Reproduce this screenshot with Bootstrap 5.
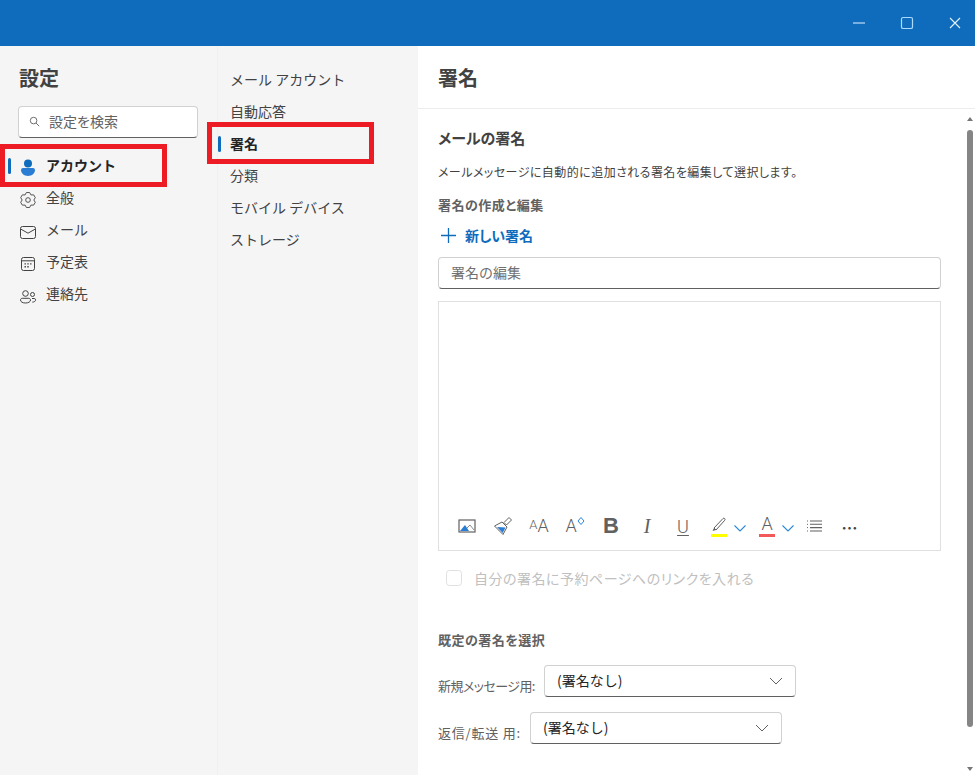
<!DOCTYPE html>
<html lang="ja">
<head>
  <meta charset="UTF-8" />
  <meta name="viewport" content="width=device-width, initial-scale=1" />
  <title>設定 - 署名</title>
  <link href="https://cdn.jsdelivr.net/npm/bootstrap@5.3.3/dist/css/bootstrap.min.css" rel="stylesheet">
  <style>
    body {
      font-family: "Noto Sans CJK JP", "Liberation Sans", sans-serif;
      font-feature-settings: "palt";
      font-size: 14px;
      color: #424242;
      background: #fff;
      height: 775px;
      overflow: hidden;
      position: relative;
    }

    /* title bar */
    .titlebar { height: 46px; background: #0f6cbd; gap: 32px; padding-right: 12px; }
    .titlebar svg { width: 16px; height: 16px; }

    .main { height: 729px; }

    /* settings columns */
    .col-nav { width: 218px; background: #f5f5f5; border-right: 1px solid #f0f0f0; padding: 18px 20px 0 18px; }
    .col-sub { width: 200px; background: #f5f5f5; padding-top: 18px; }
    .settings-title { font-size: 20px; font-weight: 700; line-height: 28px; margin: 0 0 14px 1px; color: #424242; }
    .search-box { height: 32px; width: 180px; background: #fff; border: 1px solid #d1d1d1; border-bottom-color: #616161; border-radius: 4px; padding: 0 0 2px 10px; gap: 9px; color: #616161; margin-bottom: 12px; }
    .nav-row { height: 32px; line-height: 30px; padding-bottom: 2px; position: relative; color: #424242; cursor: pointer; font-feature-settings: normal; }
    .col-nav .nav-row { gap: 9px; padding-left: 1px; }
    .col-sub .nav-row { padding-left: 12px; }
    .nav-row.active { font-weight: 700; color: #242424; }
    .nav-row.active::before { content: ""; position: absolute; top: 8px; width: 3px; height: 16px; border-radius: 2px; background: #0f6cbd; }
    .col-nav .nav-row.active::before { left: -10px; }
    .col-sub .nav-row.active::before { left: 0; }
    .nav-row svg { width: 18px; height: 18px; flex: none; margin-top: 6px; }

    /* red highlight frames */
    .red-frame { position: absolute; border: 5px solid #ed1c24; pointer-events: none; }
    .frame-account { left: 0; top: 144px; width: 167px; height: 43px; }
    .frame-sign { left: 207px; top: 122px; width: 167px; height: 42px; }

    /* right pane */
    .pane { width: 557px; }
    .pane-head { height: 63px; border-bottom: 1px solid #ededed; padding: 18px 0 0 20px; font-size: 20px; font-weight: 700; line-height: 28px; }
    .pane-body { height: 666px; }
    .pane-content { width: 547px; padding: 17px 24px 0 20px; }
    .h-mail { font-size: 15px; font-weight: 700; line-height: 24px; margin-bottom: 12px; }
    .desc { font-size: 12px; line-height: 20px; letter-spacing: .45px; margin-bottom: 13px; }
    .h-small { font-size: 13px; font-weight: 700; line-height: 20px; letter-spacing: .5px; color: #616161; }
    .new-sign { color: #0f6cbd; font-weight: 700; line-height: 20px; margin: 10px 0 12px 2px; gap: 8px; }
    .new-sign svg { width: 17px; height: 17px; }
    .sign-name { height: 32px; font-size: 14px; border-color: #d1d1d1; border-bottom-color: #616161; border-radius: 4px; padding: 0 0 2px 12px; color: #424242; }
    .sign-name::placeholder { color: #707070; }
    .editor { height: 250px; border: 1px solid #e0e0e0; margin-top: 12px; padding: 0 0 6px 10px; }
    .tool { width: 36px; height: 36px; flex: none; color: #616161; }
    .tool-wide { width: 48px; padding-left: 10px; }
    .tool svg { width: 20px; height: 20px; }
    .tool .chev { width: 14px; height: 14px; margin-left: 6px; margin-top: 3px; }
    .tool .g-a-sup { width: 8px; height: 8px; margin-bottom: 11px; }
    .g-b { font: 700 22px "Liberation Sans", sans-serif; }
    .g-i { font: italic 300 20px "Liberation Serif", serif; }
    .g-u { font: 300 18px Roboto, sans-serif; text-decoration: underline; text-decoration-thickness: 1px; text-underline-offset: 2px; }
    .g-a { font: 300 18px Roboto, sans-serif; line-height: 1; }
    .g-a-small { font: 300 13px Roboto, sans-serif; margin-bottom: 3px; }
    .colour-a { display: block; width: 16px; text-align: center; padding-bottom: 1px; border-bottom: 3px solid #f25a5a; }
    .hl-wrap { width: 16px; height: 21px; border-bottom: 3px solid #ffff00; }
    .hl-wrap svg { width: 16px; height: 16px; display: block; }
    .more { font-size: 16px; letter-spacing: 3px; color: #424242; font-weight: 700; padding-top: 1px; }

    .booking { margin: 17px 0 0 8px; gap: 12px; color: #c0c0c0; line-height: 20px; letter-spacing: .5px; }
    .booking .form-check-input { width: 16px; height: 16px; margin: 0; border-color: #e0e0e0; background-color: #fff; opacity: 1; flex: none; }
    .h-default { margin: 42px 0 15px; }
    .sig-row { gap: 9px; margin-bottom: 15px; }
    .sig-label { font-size: 13px; line-height: 20px; margin-bottom: 1px; color: #616161; }
    .label-new { letter-spacing: -.55px; }
    .label-reply { letter-spacing: .8px; }
    .sig-select {
      width: 252px; height: 32px; font-size: 14px; color: #242424;
      border-color: #d1d1d1; border-bottom-color: #616161; border-radius: 4px;
      padding: 0 30px 2px 12px;
      background-image: url("data:image/svg+xml,%3csvg xmlns='http://www.w3.org/2000/svg' viewBox='0 0 14 14'%3e%3cpath d='M1 4l6 6 6-6' fill='none' stroke='%23616161'/%3e%3c/svg%3e");
      background-size: 14px 14px; background-position: right 12px center;
    }

    /* scrollbar */
    .scrollbar { width: 10px; position: relative; }
    .sb-up, .sb-down { width: 0; height: 0; border-left: 3px solid transparent; border-right: 3px solid transparent; margin-left: 2px; }
    .sb-up { border-bottom: 4px solid #767676; margin-top: 8px; }
    .sb-down { border-top: 4px solid #767676; margin-bottom: 4px; }
    .sb-thumb { width: 6px; height: 597px; background: #858585; border-radius: 3px; margin: 9px 0 0 2px; }
  </style>
</head>
<body>

<!-- Title bar -->
<div class="titlebar d-flex justify-content-end align-items-center">
  <svg viewBox="0 0 16 16"><path d="M2 8h12" stroke="#a9cfee" stroke-width="1.4"/></svg>
  <svg viewBox="0 0 16 16"><rect x="2.5" y="2.5" width="11" height="11" rx="1.6" fill="none" stroke="#a9dcff" stroke-width="1.2"/></svg>
  <svg viewBox="0 0 16 16"><path d="M3 3l10 10M13 3L3 13" stroke="#e6f2fb" stroke-width="1.1"/></svg>
</div>

<div class="main d-flex">
  <!-- Left nav -->
  <div class="col-nav flex-shrink-0">
    <div class="settings-title">設定</div>
    <div class="search-box d-flex align-items-center">
      <svg width="11" height="11" viewBox="0 0 12 12"><circle cx="5" cy="5" r="3.6" fill="none" stroke="#616161"/><path d="M7.7 7.7l3.4 3.4" stroke="#616161"/></svg>
      <span>設定を検索</span>
    </div>
    <div class="nav-row active d-flex align-items-center">
      <svg viewBox="0 0 18 18"><circle cx="9" cy="4.5" r="4" fill="#0f6cbd"/><path d="M2 11c0-1.200 1-2 2-2h10c1 0 2 .8 2 2 0 3-3 6-7 6s-7-3-7-6z" fill="#2b7cd3"/></svg>
      <span>アカウント</span>
    </div>
    <div class="nav-row d-flex align-items-center">
      <svg viewBox="0 0 20 20"><polygon points="8.2,1.7 11.8,1.7 13.25,4.37 16.3,4.3 18.1,7.4 16.5,10 18.1,12.6 16.3,15.7 13.25,15.63 11.8,18.3 8.2,18.3 6.75,15.63 3.7,15.7 1.9,12.6 3.5,10 1.9,7.4 3.7,4.3 6.75,4.37" fill="none" stroke="#424242" stroke-linejoin="round"/><circle cx="10" cy="10" r="2.6" fill="none" stroke="#424242"/></svg>
      <span>全般</span>
    </div>
    <div class="nav-row d-flex align-items-center">
      <svg viewBox="0 0 18 18"><rect x="1.5" y="3.5" width="15" height="12" rx="2" fill="none" stroke="#424242"/><path d="M1.7 6L9 10.2 16.3 6" fill="none" stroke="#424242"/></svg>
      <span>メール</span>
    </div>
    <div class="nav-row d-flex align-items-center">
      <svg viewBox="0 0 18 18"><rect x="2.5" y="2.5" width="13" height="13" rx="2" fill="none" stroke="#424242"/><path d="M2.5 5.8h13" stroke="#424242"/><path d="M5.5 8.2h1.4v1.4H5.500zM8.300 8.200h1.400v1.400H8.300zM11.100 8.200h1.400v1.400h-1.400zM5.500 11h1.400v1.400H5.500zM8.300 11h1.400v1.400H8.300z" fill="#424242"/></svg>
      <span>予定表</span>
    </div>
    <div class="nav-row d-flex align-items-center">
      <svg viewBox="0 0 18 18"><circle cx="6.500" cy="6.500" r="2.800" fill="none" stroke="#424242"/><circle cx="13.500" cy="7.500" r="2" fill="none" stroke="#424242"/><path d="M1.500 13c0-1 .8-1.700 1.700-1.700h6.600c.9 0 1.700.7 1.700 1.700 0 1.800-2 3-5 3s-5-1.200-5-3zM13 11.500h2.300c.7 0 1.300.6 1.300 1.300 0 1.400-1.300 2.300-3.300 2.300" fill="none" stroke="#424242"/></svg>
      <span>連絡先</span>
    </div>
  </div>

  <!-- Sub nav -->
  <div class="col-sub flex-shrink-0">
    <div class="nav-row">メール アカウント</div>
    <div class="nav-row">自動応答</div>
    <div class="nav-row active">署名</div>
    <div class="nav-row">分類</div>
    <div class="nav-row">モバイル デバイス</div>
    <div class="nav-row">ストレージ</div>
  </div>

  <!-- Signature pane -->
  <div class="pane flex-shrink-0">
    <div class="pane-head">署名</div>
    <div class="pane-body d-flex">
      <div class="pane-content flex-shrink-0">
        <div class="h-mail">メールの署名</div>
        <div class="desc">メールメッセージに自動的に追加される署名を編集して選択します。</div>
        <div class="h-small">署名の作成と編集</div>
        <div class="new-sign d-flex align-items-center">
          <svg viewBox="0 0 17 17"><path d="M8.500 1v15M1 8.500h15" stroke="#0f6cbd" stroke-width="1.300"/></svg>
          <span>新しい署名</span>
        </div>
        <input class="form-control sign-name" type="text" placeholder="署名の編集">
        <div class="editor d-flex align-items-end">
          <div class="tool d-flex align-items-center justify-content-center">
            <svg viewBox="0 0 20 20"><rect x="2" y="4" width="16" height="12" fill="none" stroke="#616161" stroke-width="1.200"/><path d="M3 15l5-6 4 6z" fill="#2b7cd3"/><path d="M10 12l3-3 4 5" fill="none" stroke="#8a8a8a"/></svg>
          </div>
          <div class="tool d-flex align-items-center justify-content-center">
            <svg viewBox="0 0 20 20"><path d="M1.500 10L9 6l5 5-4 7.500z" fill="#fff" stroke="#616161" stroke-linejoin="round"/><path d="M4 11l8.500.5-2.800 5.500z" fill="#2b7cd3"/><path d="M11 6.500l5-5 2.500 2.500-5 5z" fill="#fff" stroke="#616161" stroke-linejoin="round"/></svg>
          </div>
          <div class="tool d-flex align-items-center justify-content-center">
            <span class="g-a-small">A</span><span class="g-a">A</span>
          </div>
          <div class="tool d-flex align-items-center justify-content-center">
            <span class="g-a">A</span>
            <svg class="g-a-sup" viewBox="0 0 8 8"><path d="M4 .5L7 4 4 7.500 1 4z" fill="none" stroke="#2b88d8"/></svg>
          </div>
          <div class="tool d-flex align-items-center justify-content-center g-b">B</div>
          <div class="tool d-flex align-items-center justify-content-center g-i">I</div>
          <div class="tool d-flex align-items-center justify-content-center g-u">U</div>
          <div class="tool tool-wide d-flex align-items-center justify-content-start">
            <div class="hl-wrap">
              <svg viewBox="0 0 16 16"><path d="M3 12L12 2.500c1-1 2.800.5 1.800 1.700L5 14z" fill="none" stroke="#616161"/><path d="M1.500 15l1.500-3 2 2z" fill="#616161"/></svg>
            </div>
            <svg class="chev" viewBox="0 0 14 14"><path d="M1.500 4.500L7 10l5.500-5.500" fill="none" stroke="#2b88d8" stroke-width="1.100"/></svg>
          </div>
          <div class="tool tool-wide d-flex align-items-center justify-content-start">
            <span class="g-a colour-a">A</span>
            <svg class="chev" viewBox="0 0 14 14"><path d="M1.500 4.500L7 10l5.500-5.500" fill="none" stroke="#2b88d8" stroke-width="1.100"/></svg>
          </div>
          <div class="tool d-flex align-items-center justify-content-center">
            <svg viewBox="0 0 20 20"><path d="M5 5h12M5 8.300h12M5 11.600h12M5 15h12" stroke="#616161" stroke-width="1.100"/><path d="M2.500 4.500v1M2.500 7.800v1M2.500 11.100v1M2.500 14.500v1" stroke="#2b6cd3"/></svg>
          </div>
          <div class="tool d-flex align-items-center justify-content-center more">⋯</div>
        </div>

        <div class="booking d-flex align-items-center">
          <input class="form-check-input" type="checkbox" disabled>
          <span>自分の署名に予約ページへのリンクを入れる</span>
        </div>

        <div class="h-small h-default">既定の署名を選択</div>
        <div class="sig-row d-flex align-items-end">
          <span class="sig-label label-new">新規メッセージ用:</span>
          <select class="form-select sig-select"><option>(署名なし)</option></select>
        </div>
        <div class="sig-row d-flex align-items-end">
          <span class="sig-label label-reply">返信/転送 用:</span>
          <select class="form-select sig-select"><option>(署名なし)</option></select>
        </div>
      </div>
      <div class="scrollbar d-flex flex-column justify-content-between flex-shrink-0">
        <div>
          <div class="sb-up"></div>
          <div class="sb-thumb"></div>
        </div>
        <div class="sb-down"></div>
      </div>
    </div>
  </div>
</div>

<div class="red-frame frame-account"></div>
<div class="red-frame frame-sign"></div>

<script src="https://cdn.jsdelivr.net/npm/bootstrap@5.3.3/dist/js/bootstrap.bundle.min.js"></script>
</body>
</html>
